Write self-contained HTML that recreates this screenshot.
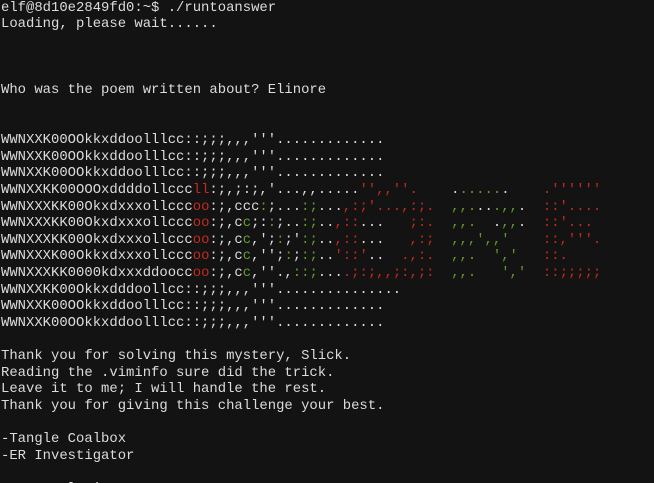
<!DOCTYPE html>
<html><head><meta charset="utf-8">
<style>
html,body{margin:0;padding:0;background:#131313;width:654px;height:483px;overflow:hidden}
pre{margin:0;padding:0 0 0 1px;position:relative;top:-0.5px;font-family:"Liberation Mono",monospace;font-size:13.9px;line-height:16.6px;color:#dcdcdc;white-space:pre}
.r{color:#c52a1d}.g{color:#5f9f28}
</style></head><body>
<pre>elf@8d10e2849fd0:~$ ./runtoanswer
Loading, please wait......



Who was the poem written about? Elinore


WWNXXK00OOkkxddoolllcc::;;;,,,'''.............
WWNXXK00OOkkxddoolllcc::;;;,,,'''.............
WWNXXK00OOkkxddoolllcc::;;;,,,'''.............
WWNXXKK00OOOxddddollccc<span class="r">ll</span>:;,;:;,'...,,.....<span class="r">'',,''.</span>    .<span class="g">.....</span>.    <span class="r">.''''''</span>
WWNXXXKK00Okxdxxxollccc<span class="r">oo</span>:;,ccc<span class="g">:</span>;...<span class="g">:;</span>...<span class="r">,:;'...,:;.</span>  <span class="g">,,.</span>..<span class="g">.,,</span>.  <span class="r">::'....</span>
WWNXXXKK00Okxdxxxollccc<span class="r">oo</span>:;,c<span class="g">c</span>;:<span class="g">:</span>;..<span class="g">:;</span>..<span class="r">,::</span>...   <span class="r">;:.</span>  <span class="g">,,.</span>  .<span class="g">,,</span>.  <span class="r">::'...</span>
WWNXXXKK00Okxdxxxollccc<span class="r">oo</span>:;,c<span class="g">c</span>,';<span class="g">:</span>;'<span class="g">:;</span>..<span class="r">,::</span>...   <span class="r">,:;</span>  <span class="g">,,,',,'</span>    <span class="r">::,'''.</span>
WWNXXXK00Okkxdxxxollccc<span class="r">oo</span>:;,c<span class="g">c</span>,'';<span class="g">:</span>;<span class="g">:;</span>..<span class="r">'::'</span>..  <span class="r">.,:.</span>  <span class="g">,,.</span>  <span class="g">','</span>   <span class="r">::.</span>
WWNXXXKK0000kdxxxddoocc<span class="r">oo</span>:;,c<span class="g">c</span>,''.,<span class="g">::;</span>...<span class="r">.;:;,,;:,;:</span>  <span class="g">,,.</span>   <span class="g">','</span>  <span class="r">::;;;;;</span>
WWNXXKK00Okkxdddoollcc::;;;,,,'''...............
WWNXXK00OOkkxddoolllcc::;;;,,,'''.............
WWNXXK00OOkkxddoolllcc::;;;,,,'''.............

Thank you for solving this mystery, Slick.
Reading the .viminfo sure did the trick.
Leave it to me; I will handle the rest.
Thank you for giving this challenge your best.

-Tangle Coalbox
-ER Investigator

Congratulations!
</pre>
</body></html>
